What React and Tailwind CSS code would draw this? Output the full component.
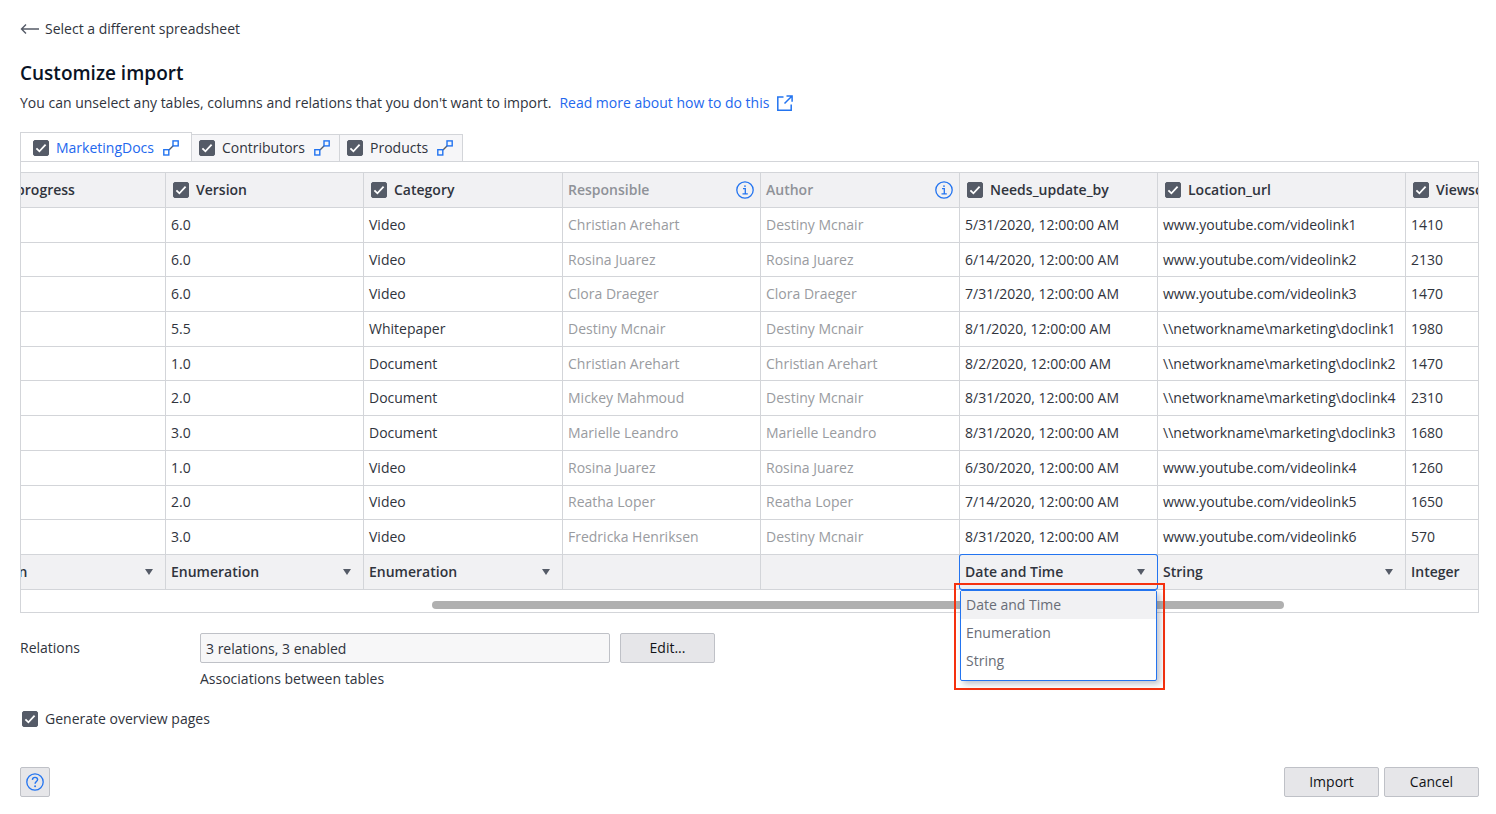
import React, { useState } from "react";

const TABS = ["MarketingDocs", "Contributors", "Products"];

const COLUMNS = [
  { name: "In_progress", type: "Boolean", width: "w-[199px]" },
  { name: "Version", type: "Enumeration", width: "w-[198px]" },
  { name: "Category", type: "Enumeration", width: "w-[199px]" },
  { name: "Responsible", relation: true, width: "w-[198px]" },
  { name: "Author", relation: true, width: "w-[199px]" },
  { name: "Needs_update_by", type: "Date and Time", width: "w-[198px]", open: true },
  { name: "Location_url", type: "String", width: "w-[248px]" },
  { name: "Viewscount", type: "Integer", width: "w-[198px]" },
];

const ROWS = [
  ["", "6.0", "Video", "Christian Arehart", "Destiny Mcnair", "5/31/2020, 12:00:00 AM", "www.youtube.com/videolink1", "1410"],
  ["", "6.0", "Video", "Rosina Juarez", "Rosina Juarez", "6/14/2020, 12:00:00 AM", "www.youtube.com/videolink2", "2130"],
  ["", "6.0", "Video", "Clora Draeger", "Clora Draeger", "7/31/2020, 12:00:00 AM", "www.youtube.com/videolink3", "1470"],
  ["", "5.5", "Whitepaper", "Destiny Mcnair", "Destiny Mcnair", "8/1/2020, 12:00:00 AM", "\\\\networkname\\marketing\\doclink1", "1980"],
  ["", "1.0", "Document", "Christian Arehart", "Christian Arehart", "8/2/2020, 12:00:00 AM", "\\\\networkname\\marketing\\doclink2", "1470"],
  ["", "2.0", "Document", "Mickey Mahmoud", "Destiny Mcnair", "8/31/2020, 12:00:00 AM", "\\\\networkname\\marketing\\doclink4", "2310"],
  ["", "3.0", "Document", "Marielle Leandro", "Marielle Leandro", "8/31/2020, 12:00:00 AM", "\\\\networkname\\marketing\\doclink3", "1680"],
  ["", "1.0", "Video", "Rosina Juarez", "Rosina Juarez", "6/30/2020, 12:00:00 AM", "www.youtube.com/videolink4", "1260"],
  ["", "2.0", "Video", "Reatha Loper", "Reatha Loper", "7/14/2020, 12:00:00 AM", "www.youtube.com/videolink5", "1650"],
  ["", "3.0", "Video", "Fredricka Henriksen", "Destiny Mcnair", "8/31/2020, 12:00:00 AM", "www.youtube.com/videolink6", "570"],
];

const TYPES = ["Date and Time", "Enumeration", "String"];

function Checkbox({ id, label }) {
  return (
    <span className="grid size-4 shrink-0 place-items-center">
      <input
        id={id}
        type="checkbox"
        defaultChecked
        aria-label={label}
        className="peer col-start-1 row-start-1 size-4 appearance-none rounded-[2px] border border-[#555b67] bg-white checked:bg-[#555b67]"
      />
      <svg viewBox="0 0 16 16" className="pointer-events-none invisible col-start-1 row-start-1 size-4 peer-checked:visible" fill="none" stroke="#fff" strokeWidth="1.8" aria-hidden="true">
        <path d="M3.4 8.3l3 3 6.2-6.6" />
      </svg>
    </span>
  );
}

function RelationIcon() {
  return (
    <svg viewBox="0 0 16 16" className="size-4 shrink-0" fill="none" aria-hidden="true">
      <path d="M6 10l4.200-4.200" stroke="#555b67" strokeWidth="1.300" />
      <rect x="0.800" y="9.700" width="5" height="5.300" stroke="#2374f0" strokeWidth="1.400" />
      <rect x="10" y="0.900" width="5.200" height="5" stroke="#2374f0" strokeWidth="1.400" />
    </svg>
  );
}

function InfoIcon() {
  return (
    <svg viewBox="0 0 18 18" className="size-[18px] shrink-0" fill="none" stroke="#2374f0" aria-hidden="true">
      <circle cx="9" cy="9" r="8.200" strokeWidth="1.300" />
      <path d="M7 7.700h2.300v5M6.500 12.900h5.300" strokeWidth="1.300" />
      <circle cx="9" cy="5.100" r="0.900" fill="#2374f0" stroke="none" />
    </svg>
  );
}

function HelpIcon() {
  return (
    <svg viewBox="0 0 18 18" className="size-[18px]" fill="none" stroke="#2374f0" aria-hidden="true">
      <circle cx="9" cy="9" r="8.200" strokeWidth="1.300" />
      <path d="M6.400 6.900C6.500 5.300 7.500 4.400 9 4.400s2.600.9 2.600 2.200c0 1.900-2.500 2-2.500 4.200" strokeWidth="1.400" />
      <circle cx="9.100" cy="13.200" r="0.950" fill="#2374f0" stroke="none" />
    </svg>
  );
}

function TypeSelect({ column }) {
  return (
    <div
      className={
        column.open
          ? "relative flex h-[34px] items-center rounded-[2px] ring-1 ring-[#2374f0]"
          : "relative flex h-[34px] items-center"
      }
    >
      <select
        aria-label={`Type of ${column.name}`}
        defaultValue={column.type}
        className="h-full w-full appearance-none bg-transparent pl-[5px] font-semibold outline-none"
      >
        {[...new Set([column.type, ...TYPES])].map((type) => (
          <option key={type}>{type}</option>
        ))}
      </select>
      <svg viewBox="0 0 8 6" className="pointer-events-none absolute right-3 h-1.5 w-2" fill="#555b67" aria-hidden="true">
        <path d="M0 0h8L4 6z" />
      </svg>
    </div>
  );
}

function ImportTable() {
  return (
    <div className="overflow-hidden">
      <table className="-ml-[55px] h-[418px] w-[1637px] table-fixed border-collapse">
        <thead>
          <tr className="h-[35px] bg-[#f1f1f3]">
            {COLUMNS.map((column) => (
              <th key={column.name} className={`${column.width} border border-[#d3d5d9] p-0 text-left font-semibold`}>
                {column.relation ? (
                  <div className="flex items-center justify-between pr-1.5 pl-[5px] text-[#8f9298]">
                    {column.name}
                    <InfoIcon />
                  </div>
                ) : (
                  <div className="flex items-center gap-[7px] pl-[7px]">
                    <Checkbox label={`Import ${column.name}`} />
                    {column.name}
                  </div>
                )}
              </th>
            ))}
          </tr>
        </thead>
        <tbody>
          {ROWS.map((row, rowIndex) => (
            <tr key={rowIndex} className="h-[34px]">
              {row.map((value, index) => (
                <td
                  key={index}
                  className={`border border-[#d3d5d9] py-0 pr-0 pl-[5px] whitespace-nowrap ${COLUMNS[index].relation ? "text-[#999ba0]" : ""}`}
                >
                  {value}
                </td>
              ))}
            </tr>
          ))}
        </tbody>
        <tfoot>
          <tr className="h-[35px] bg-[#f1f1f3]">
            {COLUMNS.map((column) => (
              <td key={column.name} className="border border-[#d3d5d9] p-0">
                {column.type && <TypeSelect column={column} />}
              </td>
            ))}
          </tr>
        </tfoot>
      </table>
    </div>
  );
}

export default function App() {
  const [active, setActive] = useState(0);
  const button = "h-[30px] w-[95px] rounded-[2px] border border-[#bfc1c7] bg-[#e6e6e9] text-[#111318]";

  return (
    <main className="flex min-h-screen flex-col bg-white pt-[18px] pr-[17px] pb-[17px] pl-5 font-['Open_Sans',sans-serif] text-sm text-[#30343d]">
      <a href="#back" className="flex items-center gap-1.5 self-start leading-[22px]">
        <svg viewBox="0 0 19 12" className="h-3 w-[19px]" fill="none" stroke="#555b67" strokeWidth="1.400" aria-hidden="true">
          <path d="M19 6H1.500M6 1.500L1.500 6 6 10.500" />
        </svg>
        Select a different spreadsheet
      </a>

      <h1 className="mt-5 text-[19px] leading-[26px] font-semibold text-[#0a1325]">Customize import</h1>
      <p className="mt-1.5 flex items-center gap-2 leading-[22px]">
        You can unselect any tables, columns and relations that you don't want to import.
        <a href="#docs" className="flex items-center gap-2 text-[#2368ee]">
          Read more about how to do this
          <svg viewBox="0 0 16 16" className="size-4" fill="none" stroke="#2374f0" strokeWidth="1.500" aria-hidden="true">
            <path d="M6.500 2H.8v13.200h13.400V9.500M9.500.9h5.600v5.800M15 1L7.500 8.500" />
          </svg>
        </a>
      </p>

      <div className="mt-[18px] flex items-end">
        {TABS.map((tab, index) => (
          <div
            key={tab}
            className={
              index === active
                ? "relative -mb-px flex h-[30px] items-center border border-b-0 border-[#d3d5d9] bg-white pr-3 pl-3 text-[#2368ee]"
                : "flex h-[27px] items-center border-t border-r border-[#d3d5d9] bg-[#f6f6f8] pr-[9px] pl-[7px]"
            }
          >
            <Checkbox label={`Import ${tab}`} />
            <button type="button" onClick={() => setActive(index)} className="pr-[9px] pl-[7px]">
              {tab}
            </button>
            <RelationIcon />
          </div>
        ))}
      </div>

      <section className="relative border border-[#d3d5d9] pt-2.5">
        <ImportTable />
        <div className="flex h-[22px] items-center pt-2">
          <div className="ml-[28.2%] h-2 w-[58.5%] rounded-full bg-[#b0b0b0]" />
        </div>

        <div className="absolute top-[421px] left-[933px] h-[107px] w-[211px] border-2 border-[#f5310f] p-[5px] pl-1">
          <ul role="listbox" aria-label="Column type" className="h-[91px] w-[197px] rounded-[2px] border border-[#2374f0] bg-white text-[#696d77] shadow-[3px_3px_6px_rgba(40,50,80,0.3)]">
            {TYPES.map((type, index) => (
              <li
                key={type}
                role="option"
                aria-selected={index === 0}
                className={`flex h-7 items-center px-[5px] ${index === 0 ? "bg-[#f1f1f3]" : ""}`}
              >
                {type}
              </li>
            ))}
          </ul>
        </div>
      </section>

      <div className="mt-5 flex items-start">
        <label htmlFor="relations" className="w-[180px] leading-[30px]">
          Relations
        </label>
        <div>
          <div className="flex gap-2.5">
            <input id="relations" readOnly value="3 relations, 3 enabled" className="h-[30px] w-[410px] rounded-[2px] border border-[#bfc1c7] bg-[#f7f7f8] px-[5px]" />
            <button type="button" className={button}>
              Edit...
            </button>
          </div>
          <p className="mt-[5px] leading-[22px]">Associations between tables</p>
        </div>
      </div>

      <div className="mt-[18px] flex items-center gap-[7px] pl-0.5 leading-[22px]">
        <Checkbox id="overview" />
        <label htmlFor="overview">Generate overview pages</label>
      </div>

      <footer className="mt-auto flex items-center gap-[5px]">
        <button type="button" aria-label="Help" className="mr-auto grid size-[30px] place-items-center rounded-[2px] border border-[#bfc1c7] bg-[#e6e6e9]">
          <HelpIcon />
        </button>
        <button type="button" className={button}>
          Import
        </button>
        <button type="button" className={button}>
          Cancel
        </button>
      </footer>
    </main>
  );
}
